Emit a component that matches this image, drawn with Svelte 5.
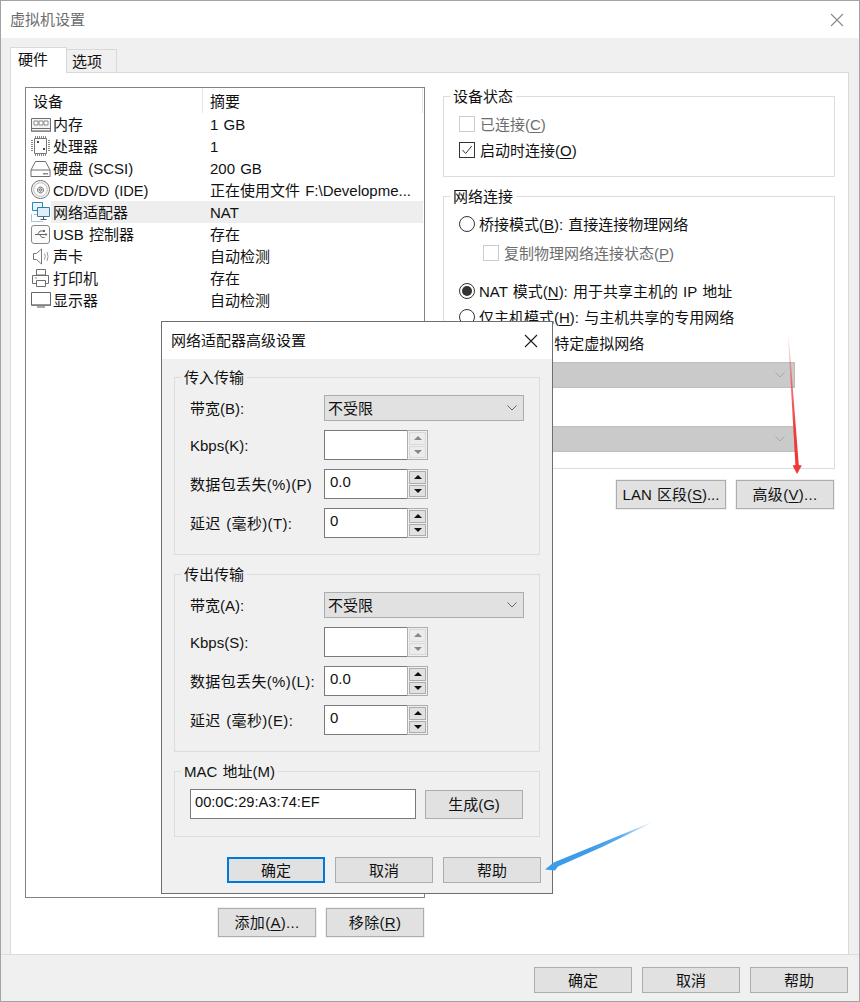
<script>
  const G = '#6e6e6e';
  const icons = {
    mem: [
      ['M1.5 5.5h19v13h-19z M1.5 15.500h19', G, '#f4f4f4'],
      ['M4 8h4v4H4z M9 8h4v4H9z M14 8h4v4h-4z', '#8a8a8a', '#fff'],
      ['M2 17h18v1.500H2z', 'none', '#a8a8a8']
    ],
    cpu: [
      ['M4.5 3.500h12v15h-12z', '#777', '#fff'],
      ['M5.500 1v2 M7.500 1v2 M9.500 1v2 M11.500 1v2 M13.500 1v2 M15.500 1v2 M5.500 19v2 M7.500 19v2 M9.500 19v2 M11.500 19v2 M13.500 19v2 M15.500 19v2 M1 5.500h2 M1 7.500h2 M1 9.500h2 M1 11.500h2 M1 13.500h2 M1 15.500h2 M18 5.500h2 M18 7.500h2 M18 9.500h2 M18 11.500h2 M18 13.500h2 M18 15.500h2', '#888', 'none'],
      ['M7 6h2v2H7z M13 13h2v2h-2z', 'none', '#444']
    ],
    hdd: [
      ['M5.5 4.500h10l4.500 8.500v6.500h-19v-6.500z', G, '#fff'],
      ['M1 13h19', G, 'none'],
      ['M13 16h5v1.500h-5z', 'none', '#888']
    ],
    cd: [
      ['M10.500 1.500a9 9 0 1 0 .01 0z', '#777', '#f4f4f4'],
      ['M10.500 3.800a6.700 6.700 0 1 0 .01 0z', '#bbb', '#fff'],
      ['M10.500 8a3 3 0 1 0 .01 0z', '#777', '#ddd'],
      ['M10.500 10a1 1 0 1 0 .01 0z', '#666', '#fff']
    ],
    net: [
      ['M2.500 1.500h10v8h-10z', '#2e86c1', '#eaf4fb'],
      ['M7.500 6.500h12v9h-12z', '#3a7ca8', '#dfeef8'],
      ['M13.500 15.500v2.500 M10.500 18.500h6', '#555', 'none'],
      ['M1.500 13v8 M1.500 20.500h12 M4 13.500h3', '#a9c4d6', 'none']
    ],
    usb: [
      ['M4 2.500h13a2.500 2.500 0 0 1 2.500 2.500v13a2.500 2.500 0 0 1-2.500 2.500h-13a2.500 2.500 0 0 1-2.500-2.500v-13a2.500 2.500 0 0 1 2.500-2.500z', '#888', '#fbfbfb'],
      ['M5 11.500h11 M7.500 11.500l2.500-3.500h3 M9.500 11.500l2.500 3h2.500', '#666', 'none'],
      ['M15.500 10l2 1.500-2 1.500z M13 7h2v2h-2z', 'none', '#666']
    ],
    snd: [
      ['M3.500 8.500h3l5-4.500v15l-5-4.500h-3z', '#777', '#fff'],
      ['M14.500 8.500q1.500 3 0 6 M17 7q2 4.500 0 9', '#999', 'none']
    ],
    prn: [
      ['M6.500 2.500h9v5.500h-9z', G, '#fff'],
      ['M2.500 8.500h16v8h-16z', G, '#fff'],
      ['M6.500 13.500h9v6h-9z', G, '#fff'],
      ['M5 11h2', '#888', 'none']
    ],
    mon: [
      ['M1.500 3.500h19v13h-19z', '#666', '#fff'],
      ['M2 15h18v1.500H2z', 'none', '#999'],
      ['M7 17h8v2H7z', 'none', '#aaa']
    ]
  };
  const devices = [
    { i: 'mem', n: '内存', s: '1 GB' },
    { i: 'cpu', n: '处理器', s: '1' },
    { i: 'hdd', n: '硬盘 (SCSI)', s: '200 GB' },
    { i: 'cd', n: 'CD/DVD (IDE)', s: '正在使用文件 F:\\Developme...', lat: true },
    { i: 'net', n: '网络适配器', s: 'NAT', sel: true },
    { i: 'usb', n: 'USB 控制器', s: '存在' },
    { i: 'snd', n: '声卡', s: '自动检测' },
    { i: 'prn', n: '打印机', s: '存在' },
    { i: 'mon', n: '显示器', s: '自动检测' }
  ];
  const groups = [
    { t: '传入传输', b: '带宽(B):', k: 'Kbps(K):', l: '数据包丢失(%)(P)', d: '延迟 (毫秒)(T):' },
    { t: '传出传输', b: '带宽(A):', k: 'Kbps(S):', l: '数据包丢失(%)(L):', d: '延迟 (毫秒)(E):' }
  ];
</script>

{#snippet chevron(color)}
  <svg class="chev" width="12" height="8" viewBox="0 0 12 8"><path d="M1.500 1.500 6 6l4.500-4.500" fill="none" stroke={color} /></svg>
{/snippet}

{#snippet spin(value, disabled)}
  <div class="spinbox">
    <div class="spin-input">{value}</div>
    <div class="spin-btns" class:off={disabled}>
      <span class="sb"><i class="up"></i></span>
      <span class="sb"><i class="down"></i></span>
    </div>
  </div>
{/snippet}

{#snippet close(color)}
  <svg width="14" height="14" viewBox="0 0 14 14"><path d="M1 1l12 12M13 1 1 13" fill="none" stroke={color} stroke-width="1.100" /></svg>
{/snippet}

<div class="window">
  <div class="titlebar">
    <span class="title">虚拟机设置</span>
    <span class="x">{@render close('#8a8a8a')}</span>
  </div>

  <div class="tabs">
    <div class="tab active">硬件</div>
    <div class="tab">选项</div>
  </div>

  <div class="panel">
    <div class="left">
      <div class="list">
        <div class="list-head">
          <div class="h1">设备</div>
          <div class="h2">摘要</div>
        </div>
        {#each devices as d}
          <div class="row">
            <svg class="ico" width="21" height="22" viewBox="0 0 21 22">
              {#each icons[d.i] as p}
                <path d={p[0]} stroke={p[1]} fill={p[2]} />
              {/each}
            </svg>
            <div class="rowbody" class:sel={d.sel}>
              <span class="name" class:lat={d.lat}>{d.n}</span>
              <span>{d.s}</span>
            </div>
          </div>
        {/each}
      </div>
      <div class="btnrow left-btns">
        <div class="btn tall">添加(<u>A</u>)...</div>
        <div class="btn tall">移除(<u>R</u>)</div>
      </div>
    </div>

    <div class="right">
      <div class="group status">
        <span class="legend">设备状态</span>
        <div class="opt dim"><span class="check off"></span>已连接(<u>C</u>)</div>
        <div class="opt s4">
          <span class="check on">
            <svg width="14" height="14" viewBox="0 0 14 14"><path d="M2.500 7l3.200 3.500 6-7.500" fill="none" stroke="#333" /></svg>
          </span>启动时连接(<u>O</u>)
        </div>
      </div>

      <div class="group net">
        <span class="legend">网络连接</span>
        <div class="opt"><span class="radio"></span>桥接模式(<u>B</u>): 直接连接物理网络</div>
        <div class="opt dim sub"><span class="check off"></span>复制物理网络连接状态(<u>P</u>)</div>
        <div class="opt nat"><span class="radio on"></span>NAT 模式(<u>N</u>): 用于共享主机的 IP 地址</div>
        <div class="opt s4"><span class="radio"></span>仅主机模式(<u>H</u>): 与主机共享的专用网络</div>
        <div class="opt s4"><span class="radio"></span>自定义(<u>U</u>): 特定虚拟网络</div>
        <div class="dd first">{@render chevron('#a8a8a8')}</div>
        <div class="opt lan">LAN 区段(<u>L</u>):</div>
        <div class="dd second">{@render chevron('#a8a8a8')}</div>
      </div>

      <div class="btnrow right-btns">
        <div class="btn tall wide">LAN 区段(<u>S</u>)...</div>
        <div class="btn tall">高级(<u>V</u>)...</div>
      </div>
    </div>
  </div>

  <div class="footer">
    <div class="btn">确定</div>
    <div class="btn">取消</div>
    <div class="btn">帮助</div>
  </div>

  <div class="modal">
    <div class="m-title">
      <span>网络适配器高级设置</span>
      <span class="m-x">{@render close('#1a1a1a')}</span>
    </div>
    <div class="m-body">
      {#each groups as g}
        <div class="group m-group">
          <span class="legend">{g.t}</span>
          <div class="m-grid">
            <span class="lab">{g.b}</span>
            <div class="select"><span>不受限</span>{@render chevron('#666')}</div>
            <span class="lab">{g.k}</span>
            {@render spin('', true)}
            <span class="lab stretch">{g.l}</span>
            {@render spin('0.0', false)}
            <span class="lab stretch">{g.d}</span>
            {@render spin('0', false)}
          </div>
        </div>
      {/each}
      <div class="group mac">
        <span class="legend">MAC 地址(M)</span>
        <div class="mac-input">00:0C:29:A3:74:EF</div>
        <div class="btn gen">生成(G)</div>
      </div>
      <div class="m-foot">
        <div class="btn primary">确定</div>
        <div class="btn">取消</div>
        <div class="btn">帮助</div>
      </div>
    </div>
  </div>

  <svg class="arrows" width="860" height="1002" viewBox="0 0 860 1002">
    <defs>
      <linearGradient id="rg" gradientUnits="userSpaceOnUse" x1="788" y1="332" x2="797" y2="474">
        <stop offset="0" stop-color="#f04a4a" stop-opacity="0" />
        <stop offset=".35" stop-color="#f04a4a" stop-opacity=".75" />
        <stop offset=".7" stop-color="#f03a3a" />
      </linearGradient>
      <linearGradient id="bg" gradientUnits="userSpaceOnUse" x1="653" y1="823" x2="546" y2="872">
        <stop offset="0" stop-color="#3d9be9" stop-opacity="0" />
        <stop offset=".3" stop-color="#3d9be9" stop-opacity=".85" />
        <stop offset=".6" stop-color="#3d9be9" />
      </linearGradient>
    </defs>
    <polygon fill="url(#rg)" points="787.800,332 788.400,332 798.800,465 801.800,465.500 797,474 792.600,465.500 795.400,465" />
    <polygon fill="url(#bg)" points="652,822 600,843.500 556,861.500 553,863 545,869.500 555,870.500 558,866.500 602,847 652.500,822.500" />
  </svg>
</div>

<style>
  :global(body) { margin: 0; background: #fff; }
  .window {
    position: relative;
    width: 860px;
    height: 1002px;
    box-sizing: border-box;
    border: 1px solid #a3a3a3;
    background: #f0f0f0;
    display: flex;
    flex-direction: column;
    overflow: hidden;
    font: 15px/22px "Liberation Sans", "Noto Sans CJK SC", sans-serif;
    word-spacing: 1px;
    color: #111;
  }
  u { text-underline-offset: 2px; text-decoration-thickness: 1px; }

  .titlebar {
    height: 37px;
    flex: none;
    background: #fff;
    display: flex;
    align-items: center;
    justify-content: space-between;
    padding: 0 15px 0 9px;
  }
  .title { color: #6d6d6d; }
  .x { display: flex; }

  .tabs {
    flex: none;
    height: 34px;
    box-sizing: border-box;
    padding: 9px 0 0 9px;
    display: flex;
    align-items: flex-end;
  }
  .tab {
    width: 51px;
    height: 23px;
    box-sizing: border-box;
    border: 1px solid #d9d9d9;
    border-bottom: none;
    margin-left: -1px;
    padding: 1px 0 0 5px;
    line-height: 22px;
  }
  .tab.active {
    width: 57px;
    height: 26px;
    margin-left: 0;
    margin-bottom: -1px;
    background: #fff;
    position: relative;
    z-index: 1;
    padding: 1px 0 0 7px;
  }

  .panel {
    flex: 1;
    margin: 0 10px 0 9px;
    background: #fff;
    border: 1px solid #d9d9d9;
    border-bottom: none;
    display: flex;
    gap: 18px;
    padding: 14px 0 0 14px;
    min-height: 0;
  }
  .left { width: 400px; flex: none; }
  .right { width: 392px; flex: none; padding-top: 9px; }

  .list {
    height: 811px;
    box-sizing: border-box;
    border: 1px solid #828282;
  }
  .list-head {
    display: flex;
    height: 25px;
    line-height: 27px;
  }
  .h1 { padding-left: 7px; border-right: 1px solid #e5e5e5; width: 169px; }
  .h2 { flex: 1; padding-left: 7px; border-right: 1px solid #e5e5e5; margin-right: 1px; }
  .row { display: flex; height: 22px; padding-left: 4px; }
  .ico { flex: none; }
  .rowbody {
    flex: 1;
    margin-right: 1px;
    display: flex;
    white-space: nowrap;
    line-height: 24px;
  }
  .rowbody.sel { background: #eeeeee; }
  .name { width: 159px; padding-left: 2px; box-sizing: border-box; }
  .lat { font-size: 14.67px; }

  .btnrow { display: flex; gap: 10px; justify-content: flex-end; }
  .left-btns { margin-top: 10px; padding-right: 1px; }
  .right-btns { margin-top: 11px; padding-right: 1px; }

  .btn {
    width: 98px;
    height: 26px;
    box-sizing: border-box;
    border: 1px solid #adadad;
    background: #e1e1e1;
    text-align: center;
    line-height: 25px;
    flex: none;
    white-space: nowrap;
  }
  .btn.tall { height: 29px; border: 1px solid #adadad; outline: 1px solid #f0f0f0; outline-offset: 0; line-height: 27px; letter-spacing: .3px; }
  .btn.wide { width: 110px; letter-spacing: 0; }
  .btn.primary { border: 2px solid #0078d7; line-height: 23px; }

  .group {
    position: relative;
    box-sizing: border-box;
    border: 1px solid #dcdcdc;
  }
  .legend {
    position: absolute;
    left: 6px;
    top: -11px;
    padding: 0 3px;
    background: #fff;
    white-space: nowrap;
  }
  .status { height: 81px; padding: 16px 0 0 15px; }
  .net { height: 273px; margin-top: 19px; padding: 16px 0 0 15px; }

  .opt { display: flex; align-items: center; height: 22px; box-sizing: border-box; padding-top: 2px; white-space: pre; }
  .dim { color: #6d6d6d; }
  .s4 { margin-top: 4px; }
  .sub { margin: 7px 0 0 24px; }
  .nat { margin-top: 16px; }
  .lan { margin-top: 9px; }
  .check {
    width: 16px;
    height: 16px;
    box-sizing: border-box;
    border: 1px solid #333;
    margin: -2px 5px 0 0;
    flex: none;
    display: flex;
    align-items: center;
    justify-content: center;
    background: #fff;
  }
  .check.off { border-color: #cccccc; }
  .radio {
    width: 16px;
    height: 16px;
    box-sizing: border-box;
    border: 1px solid #333;
    border-radius: 50%;
    margin: -2px 4px 0 0;
    flex: none;
    background: #fff;
    display: flex;
    align-items: center;
    justify-content: center;
  }
  .radio.on::after {
    content: "";
    width: 10px;
    height: 10px;
    border-radius: 50%;
    background: #333;
  }
  .dd {
    width: 336px;
    height: 26px;
    box-sizing: border-box;
    background: #cacaca;
    border: 1px solid #bdbdbd;
    display: flex;
    align-items: center;
    justify-content: flex-end;
    padding-right: 8px;
  }
  .dd.first { margin-top: 8px; }
  .dd.second { margin-top: 7px; }

  .footer {
    flex: none;
    height: 47px;
    box-sizing: border-box;
    border-top: 1px solid #dcdcdc;
    display: flex;
    justify-content: flex-end;
    gap: 10px;
    padding: 12px 11px 0 0;
  }

  .modal {
    position: absolute;
    left: 160px;
    top: 320px;
    width: 392px;
    height: 573px;
    box-sizing: border-box;
    border: 1px solid #6e6e6e;
    background: #f0f0f0;
  }
  .m-title {
    height: 37px;
    background: #fff;
    display: flex;
    align-items: center;
    justify-content: space-between;
    padding: 0 14px 0 9px;
  }
  .m-x { display: flex; }
  .m-body { padding: 18px 12px 0; display: flex; flex-direction: column; }
  .m-group { height: 178px; margin-bottom: 19px; padding: 17px 0 0 15px; }
  .m-group .legend, .mac .legend { background: #f0f0f0; }
  .m-grid {
    display: grid;
    grid-template-columns: 134px 200px;
    grid-template-rows: 26px 30px 30px 30px;
    row-gap: 9px;
    align-items: center;
  }
  .lab { white-space: nowrap; padding-top: 2px; }
  .stretch { letter-spacing: .35px; }
  .select {
    height: 26px;
    box-sizing: border-box;
    background: #e1e1e1;
    border: 1px solid #adadad;
    display: flex;
    align-items: center;
    justify-content: space-between;
    padding: 2px 5px 0 3px;
  }
  .select .chev { margin-top: -2px; }
  .spinbox { display: flex; width: 104px; height: 30px; }
  .spin-input {
    width: 83px;
    box-sizing: border-box;
    border: 1px solid #7a7a7a;
    border-right: none;
    background: #fff;
    padding: 1px 0 0 5px;
    line-height: 22px;
  }
  .spin-btns {
    flex: 1;
    box-sizing: border-box;
    border: 1px solid #adadad;
    padding: 1px 1px;
    background: #f0f0f0;
    display: flex;
    flex-direction: column;
    gap: 1px;
  }
  .sb {
    flex: 1;
    border: 1px solid #adadad;
    background: #e1e1e1;
    display: flex;
    align-items: center;
    justify-content: center;
  }
  .up, .down { width: 0; height: 0; border-left: 4px solid transparent; border-right: 4px solid transparent; }
  .up { border-bottom: 4px solid #111; }
  .down { border-top: 4px solid #111; }
  .off .sb { border-color: #d9d9d9; background: #ececec; }
  .off .up { border-bottom-color: #888; }
  .off .down { border-top-color: #888; }

  .mac {
    height: 66px;
    padding: 17px 0 0 15px;
    display: flex;
    gap: 9px;
    align-items: flex-start;
  }
  .mac-input {
    width: 226px;
    height: 30px;
    box-sizing: border-box;
    border: 1px solid #7a7a7a;
    background: #fff;
    padding: 1px 0 0 4px;
    line-height: 22px;
    font-size: 14.67px;
  }
  .btn.gen { height: 29px; margin-top: 1px; line-height: 27px; }
  .m-foot {
    display: flex;
    gap: 10px;
    justify-content: flex-end;
    margin: 20px -1px 0 0;
  }
  .arrows { position: absolute; left: -1px; top: -1px; pointer-events: none; }
</style>
